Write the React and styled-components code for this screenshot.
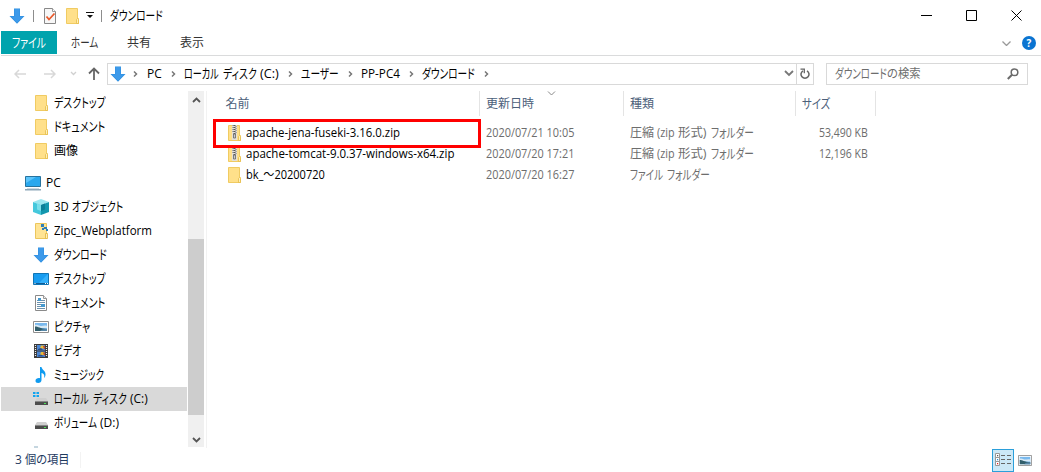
import React, { useLayoutEffect, useRef, useState } from "react";
import styled, { createGlobalStyle } from "styled-components";

const Global = createGlobalStyle`
  * { box-sizing: border-box; }
  body { margin: 0; background: #fff; overflow: hidden; }
  svg { display: block; flex: none; }
`;

const Window = styled.div`
  width: 1041px;
  height: 472px;
  padding-left: 1px;
  display: flex;
  flex-direction: column;
  overflow: hidden;
  background: #fff;
  color: #000;
  font: 12px/16px "Open Sans", "Noto Sans CJK JP", sans-serif;
`;

/* Text condensed horizontally to the width of the UI typeface */
const TextBox = styled.span`
  display: block;
  flex: none;
  width: ${(p) => p.$w}px;
  height: 16px;
  white-space: pre;
  margin-left: ${(p) => p.$gap || 0}px;
`;
const TextInner = styled.span`
  display: block;
  width: max-content;
  height: 16px;
  line-height: ${(p) => (p.$kana ? 14 : 16)}px;
  font-size: ${(p) => (p.$kana ? 13 : 12)}px;
  transform-origin: 0 50%;
  font-feature-settings: "palt";
`;
const kanaOnly = /^[\u30a0-\u30ff]+$/;
function Text({ w, gap, children }) {
  const ref = useRef(null);
  const [scale, setScale] = useState(1);
  useLayoutEffect(() => {
    setScale(w / ref.current.offsetWidth);
  }, [w]);
  return (
    <TextBox $w={w} $gap={gap}>
      <TextInner ref={ref} $kana={kanaOnly.test(children)} style={{ transform: `scaleX(${scale})` }}>
        {children}
      </TextInner>
    </TextBox>
  );
}
const Label = ({ parts }) =>
  parts.map(([text, w, gap], i) => <Text key={i} w={w} gap={gap}>{text}</Text>);

/* ---------- icons ---------- */
const DownArrow = () => (
  <svg width="16" height="16" viewBox="0 0 16 16">
    <path d="M5 .5h6v7.5h4.500L8 15.700.5 8H5z" fill="#2f8fe0" />
    <path d="M5.500 1h5v7.500H14L8 14.800 2 8.500h3.500z" fill="#3d9aea" />
  </svg>
);
const FolderShape = () => (
  <>
    <path d="M2.500.5h11v10h1v5h-12z" fill="#ffe08a" stroke="#f0cb62" />
    <path d="M12.500 15.500v-4l1-1 1 1v4z" fill="#fff0b8" stroke="#e5bb48" strokeWidth=".8" />
  </>
);
const Folder = () => (
  <svg width="16" height="16" viewBox="0 0 16 16"><FolderShape /></svg>
);
const ZipFolder = () => (
  <svg width="16" height="16" viewBox="0 0 16 16">
    <FolderShape />
    <path d="M6 0h5v15H6z" fill="#e4e0d8" />
    <path d="M7 0v8M10 1v8" stroke="#777" strokeDasharray="1 1" />
    <path d="M8.500 0v9" stroke="#555" strokeWidth="2" strokeDasharray="1 1" />
    <path d="M7.500 9h2v4h-2z" fill="#ccc" stroke="#666" strokeWidth=".8" />
  </svg>
);
const TaskDoc = () => (
  <svg width="14" height="16" viewBox="0 0 14 16">
    <path d="M1.500.5h8l3 3v12h-11z" fill="#f7f7f7" stroke="#888" />
    <path d="M9.500.5v3h3" fill="#fff" stroke="#999" />
    <path d="M3.500 8.500l2.500 3 5.500-6" fill="none" stroke="#e8592b" strokeWidth="1.800" />
  </svg>
);
const Pc = () => (
  <svg width="16" height="16" viewBox="0 0 16 16">
    <path d="M.5 1.500h15v10H.5z" fill="#2aa8ee" stroke="#27739e" />
    <path d="M1 8V2h10z" fill="#5cc4fa" />
    <path d="M0 14h16v1.500H0z" fill="#8da7b8" />
    <path d="M2 13h12v1H2z" fill="#cfdbe2" />
  </svg>
);
const Cube = () => (
  <svg width="16" height="16" viewBox="0 0 16 16">
    <path d="M0 3l8-3 8 3-8 3z" fill="#9be6ef" />
    <path d="M0 3l8 3v10l-8-3z" fill="#45c8dc" />
    <path d="M16 3L8 6v10l8-3z" fill="#1397ae" />
    <path d="M4 4.500L8 6v6l-4-1.500z" fill="#7adfea" />
    <path d="M8 6l4-1.500v6L8 12z" fill="#0b7f98" />
  </svg>
);
const ZipcFolder = () => (
  <svg width="16" height="16" viewBox="0 0 16 16">
    <path d="M2.500.5h11v15h-11z" fill="#ffe494" stroke="#ecc65c" />
    <path d="M12.500 15.500v-5h2v5z" fill="#fff0b8" stroke="#e2b640" strokeWidth=".8" />
    <path d="M9 2.500l3 2.500M12 5l2 1" stroke="#6ea3c4" />
    <path d="M8 1h3v3H8zM11 4h3v2h-3zM9 5h2v2H9zM13 6h2v2h-2z" fill="#2f7fb8" />
  </svg>
);
const Desktop = () => (
  <svg width="16" height="16" viewBox="0 0 16 16">
    <path d="M.5 2.500h15v11H.5z" fill="#189cf0" stroke="#1175b5" />
    <path d="M15 3v9L6 12z" fill="#35b1fb" />
    <path d="M1 12h14v1H1z" fill="#0d5c96" />
    <path d="M1.500 12.500h1M12 12.500h1M14 12.500h1" stroke="#fff" />
  </svg>
);
const Doc = () => (
  <svg width="16" height="16" viewBox="0 0 16 16">
    <path d="M2.500.5h8l3 3v12h-11z" fill="#fff" stroke="#8a8a8a" />
    <path d="M10.500.5v3h3" fill="#eee" stroke="#999" />
    <path d="M4 5.500h2M8 5.500h4M4 7.500h8M4 9.500h4M4 11.500h4M4 13.500h8" stroke="#6d91ac" />
    <path d="M5 3h3v3H5zM8 9h4v3H8z" fill="#4599cf" />
  </svg>
);
const Picture = ({ w = 16, h = 12 }) => (
  <svg width={w} height={h} viewBox="0 0 16 12" preserveAspectRatio="none">
    <path d="M.5.5h15v11H.5z" fill="#fff" stroke="#8f8f8f" />
    <path d="M2 2h12v8H2z" fill="#79b9ee" />
    <path d="M2 4c3-1 4 1 6 1s4-1 6 0v2H2z" fill="#d7e9f5" />
    <path d="M2 5.500c3 0 5 2 12 2.500v2H2z" fill="#315e6b" />
    <path d="M7 10c2-2 5-2 7-2v2z" fill="#5787a8" />
  </svg>
);
const Video = () => (
  <svg width="16" height="16" viewBox="0 0 16 16">
    <path d="M1 1h14v14H1z" fill="#3a3a3a" />
    <path d="M2.500 2v12M13.500 2v12" stroke="#eee" strokeWidth="1.200" strokeDasharray="1 1" />
    <path d="M4 2h8v5.500H4zM4 8.500h8V14H4z" fill="#4c86d2" />
    <path d="M8 2.500h3v3H7zM8 9h3v3H7z" fill="#e8bc36" />
    <path d="M5 6l3-1 2 2H5zM5 12.500l3-1 3 2H5z" fill="#274f8c" />
    <path d="M10 3h2v3h-1zM10 9.500h2v3h-1z" fill="#b84836" />
  </svg>
);
const Music = () => (
  <svg width="16" height="16" viewBox="0 0 16 16">
    <path d="M7 0h1.500c.3 2.800 4.500 3.800 4 8-.2 1.500-.8 2.500-1.500 3 1-3-.5-4.500-2.500-5v7c0 2-1.500 3-3.300 3S2.500 15 2.500 13.700c0-1.700 2.200-3 4.500-2.500z" fill="#0f9bf0" />
  </svg>
);
const Drive = ({ system }) => (
  <svg width="16" height="16" viewBox="0 0 16 16">
    {system && <path d="M0 1h2.500v2H0zM3.500 1H6v2H3.500zM0 4h2.500v2H0zM3.500 4H6v2H3.500z" fill="#12a4ef" />}
    <path d="M4 7h9l2 3H2z" fill="#cfcfcf" />
    <path d="M2 10h13v4H2z" fill="#4c4c4c" />
    <path d="M2 10h13v1H2z" fill="#888" />
    <path d="M11 12h2v1h-2z" fill="#4be356" />
  </svg>
);
const Line = ({ w, h, d, color = "#777", sw = 1 }) => (
  <svg width={w} height={h} viewBox={`0 0 ${w} ${h}`}>
    <path d={d} fill="none" stroke={color} strokeWidth={sw} />
  </svg>
);
const CrumbArrow = () => <Line w={5} h={8} d="M1 1.500l2.500 2.500L1 6.500" color="#777" sw={1.500} />;

/* ---------- title bar ---------- */
const TitleBar = styled.header`
  height: 31px;
  flex: none;
  display: flex;
  align-items: center;
  padding-left: 8px;
`;
const TitleSep = styled.i`
  width: 1px;
  height: 12px;
  background: #8d8d8d;
  margin: 0 ${(p) => p.$r}px 0 ${(p) => p.$l}px;
`;
const Gap = styled.span`
  flex: none;
  width: ${(p) => p.$w}px;
`;
const WindowButtons = styled.div`
  margin-left: auto;
  display: flex;
  gap: 34px;
  padding-right: 19px;
`;

/* ---------- ribbon ---------- */
const Ribbon = styled.nav`
  height: 25px;
  flex: none;
  display: flex;
  align-items: flex-start;
  border-bottom: 1px solid #dadbdc;
  padding-right: 5px;
`;
const Tab = styled.div`
  height: 23px;
  display: flex;
  align-items: center;
  padding-left: ${(p) => p.$pad}px;
  width: ${(p) => p.$w}px;
  background: ${(p) => (p.$active ? "#00a3ad" : "transparent")};
  color: ${(p) => (p.$active ? "#fff" : "#333")};
`;
const RibbonTools = styled.div`
  margin-left: auto;
  height: 24px;
  display: flex;
  align-items: center;
  gap: 11px;
`;
const Help = styled.span`
  width: 14px;
  height: 14px;
  border-radius: 50%;
  background: #0b74d1;
  color: #fff;
  font-weight: 700;
  font-size: 10px;
  line-height: 14px;
  text-align: center;
`;

/* ---------- address row ---------- */
const AddressRow = styled.div`
  height: 35px;
  flex: none;
  display: flex;
  align-items: center;
  padding: 0 13px 0 13px;
`;
const AddressBox = styled.div`
  width: 707px;
  height: 22px;
  display: flex;
  align-items: center;
  border: 1px solid #d9d9d9;
  padding-left: 2px;
`;
const CrumbSep = styled.span`
  margin: 0 8px 0 9px;
`;
const Refresh = styled.div`
  width: 17px;
  height: 20px;
  margin-left: 2px;
  border-left: 1px solid #d9d9d9;
  display: flex;
  align-items: center;
  justify-content: center;
`;
const Push = styled.span`
  margin-left: auto;
`;
const SearchBox = styled.div`
  width: 202px;
  height: 22px;
  margin-left: 12px;
  border: 1px solid #d9d9d9;
  display: flex;
  align-items: center;
  padding: 0 8px;
  color: #6d6d6d;
`;

/* ---------- body ---------- */
const Body = styled.main`
  height: 357px;
  flex: none;
  display: flex;
  overflow: hidden;
`;
const Tree = styled.aside`
  width: 187px;
  height: 357px;
  overflow: hidden;
`;
const TreeRow = styled.div`
  height: 24px;
  display: flex;
  align-items: center;
  gap: 5px;
  padding-left: ${(p) => (p.$root ? 24 : 32)}px;
  margin-top: ${(p) => (p.$root ? 8 : 0)}px;
  width: 186px;
  background: ${(p) => (p.$selected ? "#d9d9d9" : "transparent")};
`;
const TreeText = styled.span`
  display: flex;
`;
const ScrollBar = styled.div`
  width: 16px;
  height: 356px;
  background: #f0f0f0;
  display: flex;
  flex-direction: column;
  align-items: center;
  padding-top: 6px;
`;
const Thumb = styled.div`
  width: 16px;
  height: 176px;
  background: #cdcdcd;
  margin: 136px 0 22px;
`;
const List = styled.section`
  flex: 1;
  margin-left: 2px;
  border-left: 1px solid #f2f2f2;
`;
const columns = "272px 144px 172px 80px";
const HeaderRow = styled.div`
  display: grid;
  grid-template-columns: ${columns};
  height: 25px;
  padding-left: 1px;
`;
const HeaderCell = styled.div`
  position: relative;
  display: flex;
  align-items: center;
  border-right: 1px solid #e4e4e4;
  padding-left: ${(p) => p.$pad}px;
  color: #4c607a;
`;
const SortMark = styled.span`
  position: absolute;
  top: 0;
  left: 67px;
`;
const Files = styled.div`
  padding: 6px 0 0 1px;
`;
const FileRow = styled.div`
  position: relative;
  display: grid;
  grid-template-columns: ${columns};
  height: 21px;
  align-items: center;
  color: #6d6d6d;
`;
const NameCell = styled.div`
  display: flex;
  align-items: center;
  gap: 4px;
  padding-left: 18px;
  color: #000;
`;
const Cell = styled.div`
  display: flex;
  padding-left: 6px;
`;
const SizeCell = styled(Cell)`
  justify-content: flex-end;
  padding-right: 8px;
`;
const Highlight = styled.div`
  position: absolute;
  left: 5px;
  top: -3px;
  width: 268px;
  height: 29px;
  border: 3px solid #ff0000;
  z-index: 1;
`;

/* ---------- status ---------- */
const StatusBar = styled.footer`
  height: 24px;
  flex: none;
  display: flex;
  align-items: center;
  padding: 0 9px 0 14px;
  color: #1e3a5f;
`;
const StatusSep = styled.i`
  width: 1px;
  height: 16px;
  margin-left: 10px;
  background: #f3f3f3;
`;
const ViewButton = styled.div`
  width: 22px;
  height: 23px;
  margin-right: 4px;
  border: 1px solid #2b9fda;
  background: #cce8f7;
  display: flex;
  align-items: center;
  justify-content: center;
`;

const tree = [
  { icon: <Folder />, parts: [["デスクトップ", 52]] },
  { icon: <Folder />, parts: [["ドキュメント", 51]] },
  { icon: <Folder />, parts: [["画像", 24]] },
  { icon: <Pc />, parts: [["PC", 15]], root: true },
  { icon: <Cube />, parts: [["3D", 15], ["オブジェクト", 51, 3]] },
  { icon: <ZipcFolder />, parts: [["Zipc_Webplatform", 98]] },
  { icon: <DownArrow />, parts: [["ダウンロード", 53]] },
  { icon: <Desktop />, parts: [["デスクトップ", 52]] },
  { icon: <Doc />, parts: [["ドキュメント", 51]] },
  { icon: <Picture />, parts: [["ピクチャ", 36]] },
  { icon: <Video />, parts: [["ビデオ", 27]] },
  { icon: <Music />, parts: [["ミュージック", 50]] },
  { icon: <Drive system />, parts: [["ローカル", 35], ["ディスク", 34, 4], ["(C:)", 18, 3]], selected: true },
  { icon: <Drive />, parts: [["ボリューム", 43], ["(D:)", 19, 3]] },
];
const crumbs = [
  [["PC", 15]],
  [["ローカル", 35], ["ディスク", 34, 4], ["(C:)", 19, 3]],
  [["ユーザー", 38]],
  [["PP-PC4", 39]],
  [["ダウンロード", 53]],
];
const zipType = [["圧縮", 24], ["(zip", 18, 3], ["形式)", 29, 3], ["フォルダー", 43, 4]];
const files = [
  { icon: <ZipFolder />, name: ["apache-jena-fuseki-3.16.0.zip", 154], date: "2020/07/21 10:05", type: zipType, size: "53,490 KB", marked: true },
  { icon: <ZipFolder />, name: ["apache-tomcat-9.0.37-windows-x64.zip", 208], date: "2020/07/20 17:21", type: zipType, size: "12,196 KB" },
  { icon: <Folder />, name: ["bk_～20200720", 79], date: "2020/07/20 16:27", type: [["ファイル", 33], ["フォルダー", 43, 4]] },
];

export default function App() {
  return (
    <Window>
      <Global />
      <TitleBar>
        <DownArrow />
        <TitleSep $l={8} $r={9} />
        <TaskDoc />
        <Gap $w={7} />
        <Folder />
        <Gap $w={6} />
        <svg width="8" height="7" viewBox="0 0 8 7"><path d="M0 0h8v1H0zM1 3h6L4 6z" fill="#111" /></svg>
        <TitleSep $l={7} $r={8} />
        <Text w={53}>ダウンロード</Text>
        <WindowButtons>
          <Line w={11} h={11} d="M0 5.500h11" color="#000" />
          <Line w={11} h={11} d="M.5.5h10v10H.5z" color="#000" />
          <Line w={11} h={11} d="M.5.5l10 10M10.500.5l-10 10" color="#000" />
        </WindowButtons>
      </TitleBar>
      <Ribbon>
        <Tab $active $pad={11} $w={56}><Text w={34}>ファイル</Text></Tab>
        <Tab $pad={14} $w={56}><Text w={27}>ホーム</Text></Tab>
        <Tab $pad={14} $w={53}><Text w={24}>共有</Text></Tab>
        <Tab $pad={14} $w={53}><Text w={24}>表示</Text></Tab>
        <RibbonTools>
          <Line w={9} h={5} d="M.5.5l4 4 4-4" color="#999" sw={1.300} />
          <Help>?</Help>
        </RibbonTools>
      </Ribbon>
      <AddressRow>
        <Line w={12} h={10} d="M12 5H1M5 1L1 5l4 4" color="#d8d8d8" sw={1.500} />
        <Gap $w={18} />
        <Line w={12} h={10} d="M0 5h11M7 1l4 4-4 4" color="#d8d8d8" sw={1.500} />
        <Gap $w={14} />
        <Line w={7} h={5} d="M1 1l2.500 2.500L6 1" color="#d0d0d0" sw={1.300} />
        <Gap $w={11} />
        <Line w={12} h={13} d="M6 13V1.500M1 6.500l5-5 5 5" color="#666" sw={1.800} />
        <Gap $w={7} />
        <AddressBox>
          <DownArrow />
          <Gap $w={7} />
          <CrumbArrow />
          <Gap $w={9} />
          {crumbs.map((parts, i) => (
            <React.Fragment key={i}>
              <Label parts={parts} />
              <CrumbSep><CrumbArrow /></CrumbSep>
            </React.Fragment>
          ))}
          <Push><Line w={10} h={7} d="M1 1l4 4 4-4" color="#777" sw={1.800} /></Push>
          <Refresh>
            <svg width="11" height="12" viewBox="0 0 11 12">
              <path d="M7 2.800A4 4 0 1 1 3 2.800" fill="none" stroke="#666" strokeWidth="1.500" />
              <path d="M.5 1.200h3.800v4" fill="none" stroke="#666" strokeWidth="1.300" />
            </svg>
          </Refresh>
        </AddressBox>
        <SearchBox>
          <Label parts={[["ダウンロード", 52], ["の検索", 34]]} />
          <Push>
            <svg width="12" height="12" viewBox="0 0 12 12">
              <circle cx="7.500" cy="4.300" r="3.300" fill="none" stroke="#6a6a6a" strokeWidth="1.500" />
              <path d="M5 6.800L.8 11" stroke="#6a6a6a" strokeWidth="2" />
            </svg>
          </Push>
        </SearchBox>
      </AddressRow>
      <Body>
        <Tree>
          {tree.map((t, i) => (
            <TreeRow key={i} $root={t.root} $selected={t.selected}>
              {t.icon}
              <TreeText><Label parts={t.parts} /></TreeText>
            </TreeRow>
          ))}
          <TreeRow>
            <svg width="16" height="2" viewBox="0 0 16 2"><path d="M1 1h4" stroke="#8badc0" /></svg>
          </TreeRow>
        </Tree>
        <ScrollBar>
          <Line w={9} h={6} d="M1 5l3.500-3.500L8 5" color="#555" sw={1.800} />
          <Thumb />
          <Line w={9} h={6} d="M1 1l3.500 3.500L8 1" color="#555" sw={1.800} />
        </ScrollBar>
        <List>
          <HeaderRow>
            <HeaderCell $pad={17.5}><Text w={24}>名前</Text></HeaderCell>
            <HeaderCell $pad={6}>
              <Text w={48}>更新日時</Text>
              <SortMark><Line w={9} h={5} d="M1 .5l3.500 3.500L8 .5" color="#888" /></SortMark>
            </HeaderCell>
            <HeaderCell $pad={6}><Text w={24}>種類</Text></HeaderCell>
            <HeaderCell $pad={6}><Text w={28}>サイズ</Text></HeaderCell>
          </HeaderRow>
          <Files>
            {files.map((f) => (
              <FileRow key={f.name[0]}>
                <NameCell>{f.icon}<Text w={f.name[1]}>{f.name[0]}</Text></NameCell>
                <Cell><Text w={88}>{f.date}</Text></Cell>
                <Cell><Label parts={f.type} /></Cell>
                <SizeCell>{f.size && <Text w={49}>{f.size}</Text>}</SizeCell>
                {f.marked && <Highlight />}
              </FileRow>
            ))}
          </Files>
        </List>
      </Body>
      <StatusBar>
        <Text w={7}>3</Text>
        <Text w={45} gap={3}>個の項目</Text>
        <StatusSep />
        <Push />
        <ViewButton>
          <svg width="17" height="14" viewBox="0 0 17 14">
            <path d="M.5.5h4v4h-4zM.5 4.500h4v4h-4zM.5 8.500h4v4h-4z" fill="#fff" stroke="#999" />
            <path d="M2 2h1.200v1.200H2z" fill="#555" />
            <path d="M2 6h1.200v1.200H2z" fill="#2b8cd0" />
            <path d="M2 10h1.200v1.200H2z" fill="#e02020" />
            <path d="M6 2.500h4M12 2.500h4M6 6.500h4M12 6.500h4M6 10.500h4M12 10.500h4" stroke="#666" />
          </svg>
        </ViewButton>
        <Picture w={14} h={11} />
      </StatusBar>
    </Window>
  );
}
